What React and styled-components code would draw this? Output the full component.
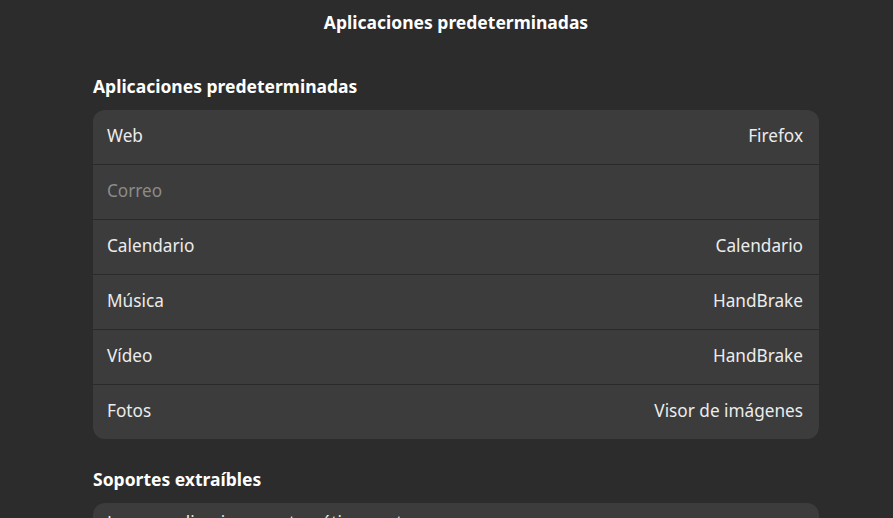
import React from "react";
import styled, { createGlobalStyle } from "styled-components";

const GlobalStyle = createGlobalStyle`
  html, body {
    margin: 0;
    padding: 0;
    background: #2c2c2c;
    height: 100%;
    overflow: hidden;
  }
  body {
    font-family: "Noto Sans", "Open Sans", sans-serif;
    color: #ececec;
  }
`;

const Page = styled.div`
  width: 893px;
  height: 518px;
  box-sizing: border-box;
  padding-left: 19px;
  display: flex;
  flex-direction: column;
  overflow: hidden;
`;

const HeaderBar = styled.div`
  height: 46px;
  flex-shrink: 0;
  display: flex;
  align-items: center;
  justify-content: center;
  padding-bottom: 2px;
  box-sizing: border-box;
`;

const HeaderTitle = styled.h1`
  margin: 0;
  font-size: 17.5px;
  font-weight: 700;
  color: #ffffff;
`;

const Content = styled.div`
  width: 726px;
  margin: 0 auto;
  padding-top: 28px;
  display: flex;
  flex-direction: column;
`;

const SectionTitle = styled.h2`
  margin: 0 0 12px;
  height: 24px;
  line-height: 24px;
  font-size: 17.5px;
  font-weight: 700;
  color: #ffffff;
`;

const Card = styled.div`
  background: #3c3c3c;
  border-radius: 12px;
  overflow: hidden;
  margin-bottom: 28px;
`;

const Row = styled.div`
  height: 54px;
  box-sizing: border-box;
  display: flex;
  align-items: ${(p) => (p.$top ? "flex-start" : "center")};
  justify-content: space-between;
  padding: ${(p) => (p.$top ? "8px 16px 0 14px" : "0 16px 3px 14px")};
  font-size: 17.2px;
  font-weight: 400;
  color: ${(p) => (p.$dim ? "#8b8b8b" : "#ececec")};
  & + & {
    height: 55px;
    border-top: 1px solid #2a2a2a;
  }
`;

const Value = styled.span`
  color: #ececec;
`;

const apps = [
  { label: "Web", value: "Firefox" },
  { label: "Correo", value: "", dim: true },
  { label: "Calendario", value: "Calendario" },
  { label: "Música", value: "HandBrake" },
  { label: "Vídeo", value: "HandBrake" },
  { label: "Fotos", value: "Visor de imágenes" },
];

export default function App() {
  return (
    <>
      <GlobalStyle />
      <Page>
        <HeaderBar>
          <HeaderTitle>Aplicaciones predeterminadas</HeaderTitle>
        </HeaderBar>
        <Content>
          <SectionTitle>Aplicaciones predeterminadas</SectionTitle>
          <Card>
            {apps.map((a) => (
              <Row key={a.label} $dim={a.dim}>
                <span>{a.label}</span>
                {a.value && <Value>{a.value}</Value>}
              </Row>
            ))}
          </Card>
          <SectionTitle>Soportes extraíbles</SectionTitle>
          <Card>
            <Row $top>
              <span>Lanzar aplicaciones automáticamente</span>
            </Row>
          </Card>
        </Content>
      </Page>
    </>
  );
}
